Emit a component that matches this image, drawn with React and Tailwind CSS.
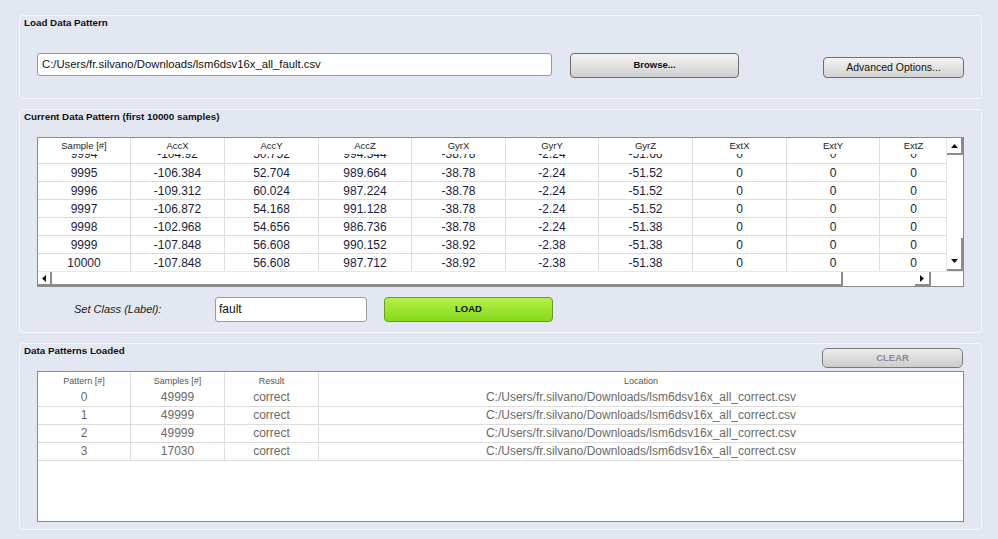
import React from "react";

const cols = ["Sample [#]", "AccX", "AccY", "AccZ", "GyrX", "GyrY", "GyrZ", "ExtX", "ExtY", "ExtZ"];

const partialRow = ["9994", "-104.92", "50.752", "994.344", "-38.78", "-2.24", "-51.66", "0", "0", "0"];

const rows = [
  ["9995", "-106.384", "52.704", "989.664", "-38.78", "-2.24", "-51.52", "0", "0", "0"],
  ["9996", "-109.312", "60.024", "987.224", "-38.78", "-2.24", "-51.52", "0", "0", "0"],
  ["9997", "-106.872", "54.168", "991.128", "-38.78", "-2.24", "-51.52", "0", "0", "0"],
  ["9998", "-102.968", "54.656", "986.736", "-38.78", "-2.24", "-51.38", "0", "0", "0"],
  ["9999", "-107.848", "56.608", "990.152", "-38.92", "-2.38", "-51.38", "0", "0", "0"],
  ["10000", "-107.848", "56.608", "987.712", "-38.92", "-2.38", "-51.38", "0", "0", "0"],
];

const loaded = [
  ["0", "49999", "correct"],
  ["1", "49999", "correct"],
  ["2", "49999", "correct"],
  ["3", "17030", "correct"],
];

const gridCols = "grid grid-cols-[93px_94px_94px_93px_94px_93px_94px_94px_93px_67px]";

const Panel = ({ title, right, className, children }) => (
  <div className={"rounded-[4px] border border-[#f7f8fc] " + className}>
    <div className="flex items-start justify-between">
      <div className="pl-[4px] pt-[1px] text-[9.8px] font-bold leading-[12px] text-[#111]">{title}</div>
      {right}
    </div>
    {children}
  </div>
);

const Arrow = ({ dir }) => {
  const pts = {
    up: "0,4 7,4 3.5,0",
    down: "0,0 7,0 3.5,4",
    left: "4,0 4,7 0,3.5",
    right: "0,0 0,7 4,3.5",
  }[dir];
  const vert = dir === "up" || dir === "down";
  return (
    <svg width={vert ? 7 : 4} height={vert ? 4 : 7} viewBox={vert ? "0 0 7 4" : "0 0 4 7"}>
      <polygon points={pts} fill="#111" />
    </svg>
  );
};

const ScrollBtn = ({ dir, className }) => (
  <div className={"flex items-center justify-center bg-white border-r-2 border-b-2 border-[#8c8c8c] " + className}>
    <Arrow dir={dir} />
  </div>
);

export default function App() {
  return (
    <div
      className="flex h-[539px] w-[998px] flex-col gap-[10px] overflow-hidden bg-[#e3e7f1] pl-[19px] pt-[15px]"
      style={{ fontFamily: "'Liberation Sans', Arial, sans-serif" }}
    >
      {/* Load Data Pattern */}
      <Panel title="Load Data Pattern" className="h-[84px] w-[963px]">
        <div className="ml-[17px] mt-[24px] flex items-start">
          <div className="flex h-[23px] w-[515px] items-center rounded-[3px] border border-[#9a9a9a] bg-white pl-[4px] text-[11.3px] text-[#111]">
            C:/Users/fr.silvano/Downloads/lsm6dsv16x_all_fault.csv
          </div>
          <button className="ml-[18px] h-[25px] w-[169px] rounded-[4px] border border-[#6e6e6e] bg-gradient-to-b from-[#f4f4f4] to-[#cfcfcf] text-[9.5px] font-bold text-[#111]">
            Browse...
          </button>
          <button className="ml-[84px] mt-[4px] h-[21px] w-[141px] rounded-[4px] border border-[#6e6e6e] bg-gradient-to-b from-[#f4f4f4] to-[#d2d2d2] text-[10.5px] text-[#111]">
            Advanced Options...
          </button>
        </div>
      </Panel>

      {/* Current Data Pattern */}
      <Panel title="Current Data Pattern (first 10000 samples)" className="h-[224px] w-[963px]">
        <div className="ml-[17px] mt-[14px] flex h-[150px] w-[927px] flex-col border border-[#8a8a8a] bg-white">
          <div className="flex h-[133px]">
            <div className="w-[908px] overflow-hidden text-center">
              <div className={gridCols + " h-[16px]"}>
                {cols.map((c, i) => (
                  <div key={c} className={"pt-[2px] text-[9.5px] leading-[12px] text-[#222] " + (i < 9 ? "border-r border-[#dedede]" : "")}>
                    {c}
                  </div>
                ))}
              </div>
              <div className="h-[10px] overflow-hidden border-b border-[#dcdcdc]">
                <div className={gridCols + " -mt-[9px] h-[18px]"}>
                  {partialRow.map((v, i) => (
                    <div key={i} className={"text-[12px] leading-[18px] text-[#1c1c3c] " + (i < 9 ? "border-r border-[#dedede]" : "")}>
                      {v}
                    </div>
                  ))}
                </div>
              </div>
              {rows.map((r, ri) => (
                <div key={ri} className={gridCols + " h-[18px] " + (ri < 5 ? "border-b border-[#dcdcdc]" : "")}>
                  {r.map((v, i) => (
                    <div key={i} className={"text-[12px] leading-[18px] text-[#1c1c3c] " + (i < 9 ? "border-r border-[#dedede]" : "")}>
                      {v}
                    </div>
                  ))}
                </div>
              ))}
            </div>
            <div className="flex w-[17px] flex-col border-l border-[#e6e6e6]">
              <ScrollBtn dir="up" className="h-[17px]" />
              <div className="flex-1" />
              <div className="h-[15px] border-r-2 border-[#8c8c8c]" />
              <ScrollBtn dir="down" className="h-[18px]" />
            </div>
          </div>
          <div className="flex h-[15px] border-t border-[#e6e6e6]">
            <ScrollBtn dir="left" className="w-[14px]" />
            <div className="w-[791px] border-r-2 border-b-2 border-[#8c8c8c]" />
            <div className="flex w-[88px] justify-end">
              <ScrollBtn dir="right" className="w-[16px]" />
            </div>
            <div className="flex-1" />
          </div>
        </div>
        <div className="mt-[10px] flex items-center">
          <div className="ml-[54px] w-[141px] text-[11px] italic text-[#222]">Set Class (Label):</div>
          <div className="flex h-[25px] w-[152px] items-start rounded-[3px] border border-[#9a9a9a] bg-white pl-[3px] pt-[4px] text-[12px] leading-[14px] text-[#111]">
            fault
          </div>
          <button className="ml-[17px] h-[25px] w-[169px] rounded-[4px] border border-[#6f9a28] bg-gradient-to-b from-[#b4f046] to-[#86d817] text-[9.5px] font-bold text-[#111]">
            LOAD
          </button>
        </div>
      </Panel>

      {/* Data Patterns Loaded */}
      <Panel
        title="Data Patterns Loaded"
        className="h-[187px] w-[963px]"
        right={
          <button className="mr-[18px] mt-[4px] h-[20px] w-[141px] rounded-[5px] border border-[#7a7a7a] bg-gradient-to-b from-[#ececec] to-[#cdcdcd] text-[9.5px] font-bold text-[#8a8a8a]">
            CLEAR
          </button>
        }
      >
        <div className="ml-[17px] mt-[3px] h-[151px] w-[927px] border border-[#8a8a8a] bg-white text-center text-[#6a6a6a]">
          <div className="grid h-[17px] grid-cols-[93px_94px_94px_1fr]">
            {["Pattern [#]", "Samples [#]", "Result", "Location"].map((c, i) => (
              <div key={c} className={"pt-[3px] text-[9px] leading-[12px] text-[#555] " + (i < 3 ? "border-r border-[#dedede]" : "")}>
                {c}
              </div>
            ))}
          </div>
          {loaded.map((r, ri) => (
            <div key={ri} className="grid h-[18px] grid-cols-[93px_94px_94px_1fr] border-b border-[#dcdcdc]">
              {[...r, "C:/Users/fr.silvano/Downloads/lsm6dsv16x_all_correct.csv"].map((v, i) => (
                <div key={i} className={"text-[12px] leading-[17px] " + (i < 3 ? "border-r border-[#dedede]" : "")}>
                  {v}
                </div>
              ))}
            </div>
          ))}
        </div>
      </Panel>
    </div>
  );
}
